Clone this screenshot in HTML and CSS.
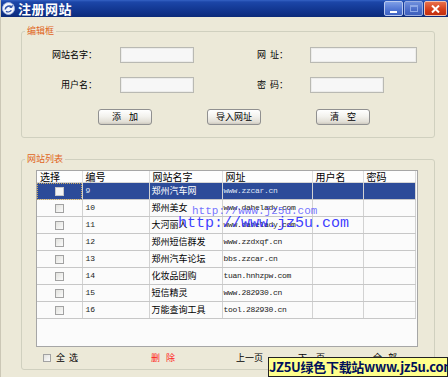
FILE: index.html
```html
<!DOCTYPE html>
<html lang="zh">
<head>
<meta charset="utf-8">
<title>注册网站</title>
<link rel="stylesheet" href="styles.css">
</head>
<body>
<div class="window">
  <div class="titlebar">
    <svg class="app-icon" width="13" height="13" viewBox="0 0 13 13">
      <circle cx="6.5" cy="6.5" r="6" fill="#f4f6fc" stroke="#9fb2e0" stroke-width="1"/>
      <path d="M3.2 7.5 C3.5 4.2 7.8 3 9.6 5.2" fill="none" stroke="#2a4ea8" stroke-width="1.6"/>
      <path d="M9.8 5.4 L10.4 3.2 M9.8 5.4 L7.6 5.2" stroke="#2a4ea8" stroke-width="1.2"/>
      <path d="M4 9.2 C5.5 10.4 8 10 9.4 8.4" fill="none" stroke="#2a4ea8" stroke-width="1.3"/>
    </svg>
    <span class="title">注册网站</span>
    <div class="caption-btns">
      <span class="cbtn cmin"><i></i></span>
      <span class="cbtn cmax"><i></i></span>
      <span class="cbtn cclose">
        <svg width="9" height="8" viewBox="0 0 9 8"><path d="M1 0.5 L8 7.5 M8 0.5 L1 7.5" stroke="#fff" stroke-width="2"/></svg>
      </span>
    </div>
  </div>

  <fieldset class="group group-edit">
    <legend>编辑框</legend>
    <div class="form-grid">
      <label class="lbl">网站名字：</label>
      <input class="txt" type="text">
      <label class="lbl lbl-r">网&nbsp;&nbsp;址：</label>
      <input class="txt txt-long" type="text">
      <label class="lbl">用户名：</label>
      <input class="txt" type="text">
      <label class="lbl lbl-r">密&nbsp;&nbsp;码：</label>
      <input class="txt" type="text">
    </div>
    <div class="btn-row">
      <button class="btn">添&nbsp;&nbsp;&nbsp;&nbsp;加</button>
      <button class="btn">导入网址</button>
      <button class="btn">清&nbsp;&nbsp;&nbsp;&nbsp;空</button>
    </div>
  </fieldset>

  <fieldset class="group group-list">
    <legend>网站列表</legend>
    <div class="list">
      <table class="grid">
        <colgroup>
          <col class="c1"><col class="c2"><col class="c3"><col class="c4"><col class="c5"><col class="c6">
        </colgroup>
        <thead>
          <tr><th>选择</th><th>编号</th><th>网站名字</th><th>网址</th><th>用户名</th><th>密码</th></tr>
        </thead>
        <tbody>
          <tr class="sel"><td class="chk focus"><span class="box"></span></td><td class="num">9</td><td>郑州汽车网</td><td class="url">www.zzcar.cn</td><td></td><td></td></tr>
          <tr><td class="chk"><span class="box"></span></td><td class="num">10</td><td>郑州美女</td><td class="url">www.dahelady.com</td><td></td><td></td></tr>
          <tr><td class="chk"><span class="box"></span></td><td class="num">11</td><td>大河丽人</td><td class="url">www.dahelady.com</td><td></td><td></td></tr>
          <tr><td class="chk"><span class="box"></span></td><td class="num">12</td><td>郑州短信群发</td><td class="url">www.zzdxqf.cn</td><td></td><td></td></tr>
          <tr><td class="chk"><span class="box"></span></td><td class="num">13</td><td>郑州汽车论坛</td><td class="url">bbs.zzcar.cn</td><td></td><td></td></tr>
          <tr><td class="chk"><span class="box"></span></td><td class="num">14</td><td>化妆品团购</td><td class="url">tuan.hnhzpw.com</td><td></td><td></td></tr>
          <tr><td class="chk"><span class="box"></span></td><td class="num">15</td><td>短信精灵</td><td class="url">www.282930.cn</td><td></td><td></td></tr>
          <tr><td class="chk"><span class="box"></span></td><td class="num">16</td><td>万能查询工具</td><td class="url">tool.282930.cn</td><td></td><td></td></tr>
        </tbody>
      </table>
      <span class="wm wm-small">http://www.jz5u.com</span>
      <span class="wm wm-big">http://www.jz5u.com</span>
    </div>
    <div class="footer">
      <span class="box fbox"></span>
      <span>全&nbsp;&nbsp;选</span>
      <span class="del">删&nbsp;&nbsp;&nbsp;除</span>
      <span>上一页</span>
      <span>下一页</span>
      <span>全&nbsp;&nbsp;&nbsp;部</span>
    </div>
  </fieldset>

  <div class="badge">JZ5U绿色下载站www.jz5u.com</div>
</div>
</body>
</html>
```
FILE: styles.css
```css
* { box-sizing: border-box; }
html, body { margin: 0; padding: 0; }
body {
  width: 448px;
  height: 377px;
  overflow: hidden;
  font-family: "Noto Sans CJK SC", "Liberation Sans", sans-serif;
  font-size: 9px;
  color: #000;
}
.window {
  position: relative;
  width: 448px;
  height: 377px;
  background: #ece9d8;
  border-left: 1px solid #cbc7b6;
  overflow: hidden;
}
.titlebar {
  height: 17px;
  display: flex;
  align-items: center;
  background: linear-gradient(#3562c4 0, #1c46a8 2px, #143a96 8px, #0e2f85 14px, #0b2a78 17px);
  padding-left: 1px;
}
.app-icon { flex: none; }
.title {
  margin-left: 3px;
  color: #fff;
  font-weight: bold;
  font-size: 13px;
  line-height: 17px;
  letter-spacing: 0.5px;
}
.caption-btns {
  margin-left: auto;
  display: flex;
  align-items: center;
  gap: 1px;
  padding-right: 1px;
}
.cbtn {
  width: 19px;
  height: 15px;
  border-radius: 2px;
  border: 1px solid #b8c8ee;
  display: flex;
  align-items: center;
  justify-content: center;
  background: linear-gradient(#7e9ee6, #4f74d2 60%, #3f63c2);
}
.cmin i {
  display: block;
  width: 7px;
  height: 2px;
  background: #fff;
  margin-top: 6px;
}
.cmax { background: linear-gradient(#6f8fdc, #4a6cc8 60%, #3e60bc); border-color: #98ace0; }
.cmax i {
  display: block;
  width: 8px;
  height: 7px;
  border: 1px solid #8ea8e6;
  border-top-width: 2px;
}
.cclose {
  width: 23px;
  background: linear-gradient(#e8704c, #d43c18 60%, #c02e10);
  border-color: #f0c0b0;
}

.group {
  margin: 0 0 0 20px;
  padding: 0;
  width: 414px;
  min-width: 0;
  border: 1px solid #d0d0bf;
  border-radius: 3px;
}
.group legend {
  margin-left: 3px;
  padding: 0 2px;
  color: #e0651d;
  font-size: 9px;
  line-height: 16px;
}
.group-edit { margin-top: 6px; padding-bottom: 12px; }

.form-grid {
  display: grid;
  grid-template-columns: 98px 74px 116px 107px;
  grid-auto-rows: 16px;
  row-gap: 14px;
  padding-top: 8px;
  align-items: center;
}
.lbl {
  text-align: right;
  padding-right: 23px;
  line-height: 16px;
  white-space: nowrap;
}
.lbl-r { padding-right: 22px; }
.txt {
  height: 16px;
  margin: 0;
  padding: 0 2px;
  border: 1px solid #b9b9b3;
  background: #f7f7f7;
  box-shadow: inset 0 0 0 1px #ececea;
  font-size: 9px;
  width: 74px;
}
.txt-long { width: 107px; }

.btn-row {
  display: flex;
  gap: 55px;
  padding-left: 76px;
  margin-top: 16px;
}
.btn {
  width: 54px;
  height: 16px;
  margin: 0;
  padding: 0;
  font-family: "Noto Sans CJK SC", sans-serif;
  font-size: 9px;
  line-height: 14px;
  color: #000;
  border: 1px solid #909090;
  border-radius: 3px;
  background: linear-gradient(#ffffff, #f3f2ee 45%, #e2dfd6 85%, #cdc9be);
}

.group-list { margin-top: 13px; padding-bottom: 4px; }
.list {
  position: relative;
  margin: 3px 0 0 14px;
  width: 382px;
  height: 177px;
  border: 1px solid #a6a6a6;
  background: #fbfbfb;
  overflow: hidden;
}
.grid {
  border-collapse: collapse;
  table-layout: fixed;
  width: 378px;
}
.c1 { width: 45px; }
.c2 { width: 67px; }
.c3 { width: 73px; }
.c4 { width: 90px; }
.c5 { width: 51px; }
.c6 { width: 52px; }
.grid th {
  height: 11px;
  padding: 0 0 0 3px;
  font-weight: normal;
  text-align: left;
  font-size: 10px;
  line-height: 11px;
  border-right: 1px solid #dcdcdc;
  border-bottom: 1px solid #d6d6d6;
  background: #fdfdfd;
  white-space: nowrap;
  overflow: visible;
}
.grid td {
  height: 17px;
  padding: 0 0 0 2px;
  border-right: 1px solid #d2d2d2;
  border-bottom: 1px solid #c7c7c7;
  white-space: nowrap;
  overflow: hidden;
  line-height: 16px;
  font-size: 9px;
}
.grid td.num, .grid td.url {
  font-family: "Liberation Mono", monospace;
  font-size: 8px;
  color: #222;
}
.grid td.num { padding-left: 3px; }
.grid td.url { letter-spacing: -0.3px; padding-left: 1px; }
.grid td.chk { text-align: center; padding: 0; }
.box {
  display: inline-block;
  width: 9px;
  height: 9px;
  vertical-align: middle;
  border: 1px solid #a2a2a2;
  background: linear-gradient(135deg, #e2e2de, #fbfbfb);
}
.grid tr.sel td {
  background: #2c4b99;
  color: #fff;
}
.grid tr.sel td.num, .grid tr.sel td.url { color: #dfe6f6; }
.grid td.focus { outline: 1px dotted #c8a860; outline-offset: -1px; }
.sel .box { background: #f4f4f4; border-color: #c8c8c8; }

.wm {
  position: absolute;
  font-family: "Liberation Mono", monospace;
  white-space: nowrap;
  pointer-events: none;
}
.wm-small {
  left: 155px;
  top: 34px;
  font-size: 11px;
  color: rgba(80, 80, 255, 0.8);
}
.wm-big {
  left: 141px;
  top: 44px;
  font-size: 15px;
  color: rgba(40, 40, 255, 0.9);
}

.footer {
  display: grid;
  grid-template-columns: 13px 95px 85px 62px 75px auto;
  align-items: center;
  height: 14px;
  margin-top: 4px;
  padding-left: 21px;
  line-height: 14px;
  font-size: 9px;
}
.fbox { width: 8px; height: 8px; }
.del { color: #ff1a1a; }

.badge {
  position: absolute;
  left: 267px;
  top: 357px;
  width: 180px;
  height: 20px;
  background: #ffff8c;
  border: 1px solid #222;
  color: #00105a;
  font-weight: bold;
  font-size: 13px;
  line-height: 18px;
  text-align: center;
  white-space: nowrap;
  letter-spacing: -0.3px;
}
```
